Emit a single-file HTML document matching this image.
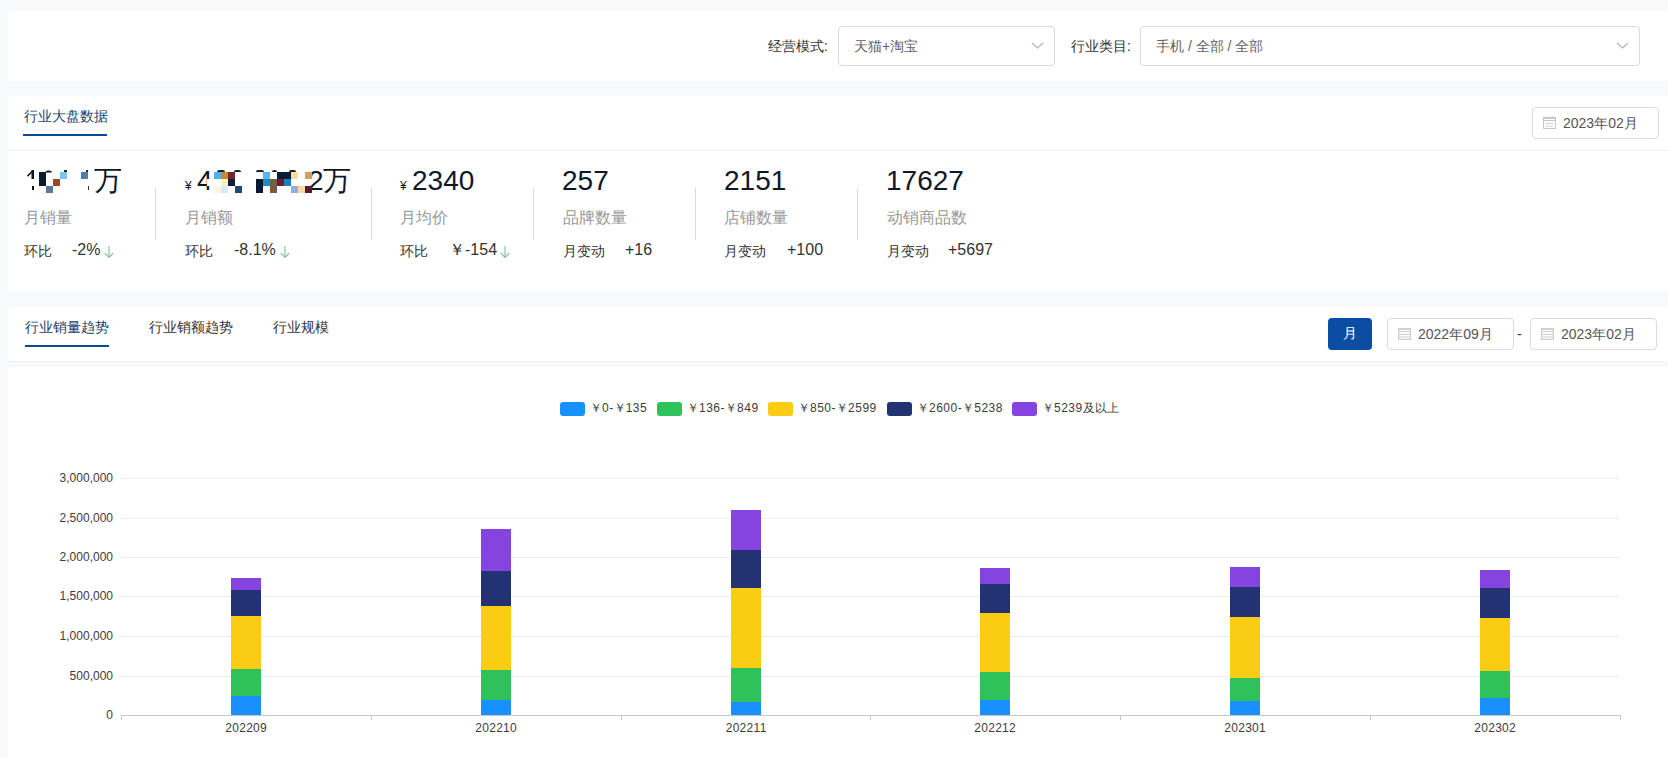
<!DOCTYPE html>
<html><head><meta charset="utf-8">
<style>
*{box-sizing:border-box;margin:0;padding:0}
html,body{width:1668px;height:758px;overflow:hidden;background:#f8f9fb;font-family:"Liberation Sans",sans-serif;color:#333}
.a{position:absolute;white-space:nowrap}
.card{position:absolute;left:8px;width:1662px;background:#fff;border-radius:4px}
.sel{position:absolute;border:1px solid #dadada;border-radius:4px;background:#fff}
.dp{position:absolute;border:1px solid #dadada;border-radius:4px;background:#fff;width:127px;height:32px}
.lbl{font-size:14px;line-height:14px;color:#333}
.big{font-size:28px;line-height:28px;color:#101828}
.sub{font-size:16px;line-height:16px;color:#999}
.hb{font-size:14px;line-height:14px;color:#333}
.val{font-size:16px;line-height:16px;color:#333}
.yl{font-size:12px;line-height:12px;color:#3c3c3c}
.vd{position:absolute;width:1px;background:#dcdcdc}
</style></head><body>

<!-- card 1 filters -->
<div class="card" style="top:11px;height:70px"></div>
<div class="a lbl" style="left:768px;top:39px">经营模式:</div>
<div class="sel" style="left:838px;top:26px;width:217px;height:40px"></div>
<div class="a lbl" style="left:854px;top:39px;color:#606266">天猫+淘宝</div>
<div class="a lbl" style="left:1071px;top:39px">行业类目:</div>
<div class="sel" style="left:1140px;top:26px;width:500px;height:40px"></div>
<div class="a lbl" style="left:1156px;top:39px;color:#606266">手机 / 全部 / 全部</div>

<svg class="a" style="left:0;top:0" width="1668" height="80" fill="none" stroke="#b4b4b4" stroke-width="1.2">
<path d="M1032 43 L1037.5 48 L1043 43"/><path d="M1617 43 L1622.5 48 L1628 43"/></svg>
<!-- card 2 -->
<div class="card" style="top:96px;height:195px"></div>
<div class="a lbl" style="left:24px;top:109px;color:#1d3f6e">行业大盘数据</div>
<div class="a" style="left:23px;top:134px;width:84px;height:2px;background:#0a4a94"></div>
<div class="dp" style="left:1532px;top:107px"></div>
<svg class="a" style="left:1543px;top:116px" width="13" height="13">
<rect x="0.5" y="1.5" width="12" height="11" fill="none" stroke="#c6c6cc"/>
<rect x="0" y="1" width="13" height="2" fill="#c6c6cc"/><rect x="1" y="4" width="11" height="1" fill="#c6c6cc"/>
<rect x="3" y="0" width="1" height="2" fill="#d0d0d6"/><rect x="9" y="0" width="1" height="2" fill="#d0d0d6"/>
<g fill="#c6c6cc"><rect x="3" y="7" width="2" height="1"/><rect x="5.5" y="7" width="2" height="1"/><rect x="8" y="7" width="2" height="1"/>
<rect x="3" y="9.5" width="2" height="1"/><rect x="5.5" y="9.5" width="2" height="1"/><rect x="8" y="9.5" width="2" height="1"/></g></svg>
<div class="a lbl" style="left:1563px;top:116px;color:#555">2023年02月</div>
<div class="a" style="left:8px;top:150px;width:1660px;height:1px;background:#eeeeee"></div>

<!-- stats -->
<svg class="a" style="left:20px;top:165px" width="80" height="30"><g fill="#0b1420"><path d="M11.5 5 H14 V14 H11.5 Z M12 21 H14 V25 H12 Z"/><path d="M7 10.6 L12.6 5 L13.4 6.6 L8 11.8 Z"/><path d="M25 7 Q28.5 4.2 32 6.8 L32 7.4 H25 Z"/></g></svg><div class="a big" id="w1" style="left:94px;top:167px">万</div><div class="a" style="left:39px;top:172px;width:7px;height:14px;background:#0b1b30"></div><div class="a" style="left:53px;top:179px;width:7px;height:7px;background:#984a22"></div><div class="a" style="left:60px;top:172px;width:7px;height:7px;background:#80c4f0"></div><div class="a" style="left:46px;top:186px;width:7px;height:7px;background:#5c7898"></div><div class="a" style="left:81px;top:172px;width:7px;height:7px;background:#4a80b0"></div><div class="a" style="left:64px;top:170px;width:3px;height:2px;background:#222"></div><div class="a" style="left:86px;top:170px;width:2px;height:2px;background:#222"></div><div class="a" style="left:88px;top:186px;width:1px;height:4px;background:#333"></div>
<div class="a sub" style="left:24px;top:210px">月销量</div>
<div class="a hb" style="left:24px;top:244px">环比</div>
<div class="a val" style="left:72px;top:242px">-2%</div>
<div class="vd" style="left:155px;top:188px;height:52px"></div>

<div class="a" style="left:185px;top:180px;font-size:12px;line-height:12px;color:#101828">¥</div><div class="a big" style="left:197px;top:167px">4</div><div class="a big" id="t2" style="left:308px;top:167px">2</div><div class="a big" id="w2" style="left:323px;top:167px">万</div><div class="a" style="left:207px;top:179px;width:7px;height:7px;background:#fff"></div><div class="a" style="left:214px;top:172px;width:7px;height:7px;background:#5aaee8"></div><div class="a" style="left:221px;top:172px;width:7px;height:7px;background:#c88a30"></div><div class="a" style="left:228px;top:172px;width:7px;height:7px;background:#7a2032"></div><div class="a" style="left:263px;top:172px;width:7px;height:7px;background:#5ab4ee"></div><div class="a" style="left:277px;top:172px;width:7px;height:7px;background:#0a1c35"></div><div class="a" style="left:284px;top:172px;width:7px;height:7px;background:#0a1c35"></div><div class="a" style="left:291px;top:172px;width:7px;height:7px;background:#ffdca0"></div><div class="a" style="left:305px;top:172px;width:7px;height:7px;background:#d4a060"></div><div class="a" style="left:221px;top:179px;width:7px;height:7px;background:#fff0b8"></div><div class="a" style="left:228px;top:179px;width:7px;height:7px;background:#0f1f35"></div><div class="a" style="left:256px;top:179px;width:7px;height:7px;background:#0a1a35"></div><div class="a" style="left:263px;top:179px;width:7px;height:7px;background:#1a8ccc"></div><div class="a" style="left:270px;top:179px;width:7px;height:7px;background:#6a6440"></div><div class="a" style="left:277px;top:179px;width:7px;height:7px;background:#701838"></div><div class="a" style="left:284px;top:179px;width:7px;height:7px;background:#1a80c0"></div><div class="a" style="left:214px;top:186px;width:7px;height:7px;background:#fff4e0"></div><div class="a" style="left:221px;top:186px;width:7px;height:7px;background:#d4ecff"></div><div class="a" style="left:235px;top:186px;width:7px;height:7px;background:#1f4a78"></div><div class="a" style="left:256px;top:186px;width:7px;height:7px;background:#0a1a35"></div><div class="a" style="left:270px;top:186px;width:7px;height:7px;background:#7a5a40"></div><div class="a" style="left:291px;top:186px;width:7px;height:7px;background:#90b0d8"></div><div class="a" style="left:298px;top:186px;width:7px;height:7px;background:#ffd8a0"></div><div class="a" style="left:305px;top:186px;width:7px;height:7px;background:#5a1a30"></div><div class="a" style="left:217px;top:170px;width:8px;height:2px;background:#1a2030;border-radius:3px 3px 0 0"></div><div class="a" style="left:234px;top:170px;width:7px;height:2px;background:#1a2030;border-radius:3px 3px 0 0"></div><div class="a" style="left:256px;top:170px;width:8px;height:2px;background:#1a2030;border-radius:3px 3px 0 0"></div><div class="a" style="left:272px;top:170px;width:5px;height:2px;background:#1a2030;border-radius:3px 3px 0 0"></div><div class="a" style="left:289px;top:170px;width:7px;height:2px;background:#1a2030;border-radius:3px 3px 0 0"></div>
<div class="a sub" style="left:185px;top:210px">月销额</div>
<div class="a hb" style="left:185px;top:244px">环比</div>
<div class="a val" style="left:234px;top:242px">-8.1%</div>
<div class="vd" style="left:371px;top:188px;height:52px"></div>

<div class="a" style="left:400px;top:180px;font-size:12px;line-height:12px;color:#101828">¥</div><div class="a big" style="left:412px;top:167px">2340</div>
<div class="a sub" style="left:400px;top:210px">月均价</div>
<div class="a hb" style="left:400px;top:244px">环比</div>
<div class="a val" style="left:449px;top:242px">￥-154</div>
<div class="vd" style="left:533px;top:188px;height:52px"></div>

<div class="a big" style="left:562px;top:167px">257</div>
<div class="a sub" style="left:563px;top:210px">品牌数量</div>
<div class="a hb" style="left:563px;top:244px">月变动</div>
<div class="a val" style="left:625px;top:242px">+16</div>
<div class="vd" style="left:695px;top:188px;height:52px"></div>

<div class="a big" style="left:724px;top:167px">2151</div>
<div class="a sub" style="left:724px;top:210px">店铺数量</div>
<div class="a hb" style="left:724px;top:244px">月变动</div>
<div class="a val" style="left:787px;top:242px">+100</div>
<div class="vd" style="left:857px;top:188px;height:52px"></div>

<div class="a big" style="left:886px;top:167px">17627</div>
<div class="a sub" style="left:887px;top:210px">动销商品数</div>
<div class="a hb" style="left:887px;top:244px">月变动</div>
<div class="a val" style="left:948px;top:242px">+5697</div>

<svg class="a" style="left:103.5px;top:246px" width="10" height="13" fill="none" stroke="#86c196" stroke-width="1.1"><path d="M5 0 V11.5 M0.8 7.2 L5 11.5 L9.2 7.2"/></svg><svg class="a" style="left:279.5px;top:246px" width="10" height="13" fill="none" stroke="#86c196" stroke-width="1.1"><path d="M5 0 V11.5 M0.8 7.2 L5 11.5 L9.2 7.2"/></svg><svg class="a" style="left:499.5px;top:246px" width="10" height="13" fill="none" stroke="#86c196" stroke-width="1.1"><path d="M5 0 V11.5 M0.8 7.2 L5 11.5 L9.2 7.2"/></svg>
<!-- card 3 -->
<div class="card" style="top:307px;height:54px;border-radius:4px 4px 0 0"></div>
<div class="a lbl" style="left:25px;top:320px;color:#1d3f6e">行业销量趋势</div>
<div class="a" style="left:25px;top:345px;width:84px;height:2px;background:#0a4a94"></div>
<div class="a lbl" style="left:149px;top:320px">行业销额趋势</div>
<div class="a lbl" style="left:273px;top:320px">行业规模</div>
<div class="a" style="left:1328px;top:318px;width:44px;height:32px;background:#0a4da3;border-radius:4px"></div>
<div class="a lbl" style="left:1343px;top:326px;color:#fff">月</div>
<div class="dp" style="left:1387px;top:318px"></div>
<svg class="a" style="left:1398px;top:328px" width="13" height="12">
<rect x="0.75" y="0.75" width="11.5" height="10.75" fill="none" stroke="#cfcfd3" stroke-width="1.5"/>
<rect x="0" y="0" width="13" height="2" fill="#cfcfd3"/>
<g fill="#cfcfd3"><rect x="2" y="3" width="9" height="1"/><rect x="2" y="6" width="9" height="1"/><rect x="2" y="8.5" width="9" height="1"/></g></svg>
<div class="a lbl" style="left:1418px;top:327px;color:#555">2022年09月</div>
<div class="a lbl" style="left:1517px;top:327px">-</div>
<div class="dp" style="left:1530px;top:318px"></div>
<svg class="a" style="left:1541px;top:328px" width="13" height="12">
<rect x="0.75" y="0.75" width="11.5" height="10.75" fill="none" stroke="#cfcfd3" stroke-width="1.5"/>
<rect x="0" y="0" width="13" height="2" fill="#cfcfd3"/>
<g fill="#cfcfd3"><rect x="2" y="3" width="9" height="1"/><rect x="2" y="6" width="9" height="1"/><rect x="2" y="8.5" width="9" height="1"/></g></svg>
<div class="a lbl" style="left:1561px;top:327px;color:#555">2023年02月</div>
<div class="a" style="left:8px;top:361px;width:1656px;height:1px;background:#efefef"></div><div class="a" style="left:8px;top:362px;width:1656px;height:5px;background:#f9f9f9"></div>

<!-- card 4 chart -->
<div class="a" style="left:0;top:367px;width:8px;height:391px;background:#f9f9f9"></div>
<div class="card" style="top:367px;height:400px"></div>

<svg class="a" style="left:0;top:0" width="1668" height="758">
<rect x="121" y="478" width="1499" height="1" fill="#eeeeee"/>
<rect x="121" y="518" width="1499" height="1" fill="#eeeeee"/>
<rect x="121" y="557" width="1499" height="1" fill="#eeeeee"/>
<rect x="121" y="596" width="1499" height="1" fill="#eeeeee"/>
<rect x="121" y="636" width="1499" height="1" fill="#eeeeee"/>
<rect x="121" y="676" width="1499" height="1" fill="#eeeeee"/>
<rect x="121" y="715" width="1500" height="1" fill="#c8c8c8"/>
<rect x="121" y="715" width="1" height="5" fill="#c8c8c8"/>
<rect x="371" y="715" width="1" height="5" fill="#c8c8c8"/>
<rect x="621" y="715" width="1" height="5" fill="#c8c8c8"/>
<rect x="870" y="715" width="1" height="5" fill="#c8c8c8"/>
<rect x="1120" y="715" width="1" height="5" fill="#c8c8c8"/>
<rect x="1370" y="715" width="1" height="5" fill="#c8c8c8"/>
<rect x="1620" y="715" width="1" height="5" fill="#c8c8c8"/>
<rect x="231" y="696" width="30" height="19" fill="#1890FF"/>
<rect x="231" y="669" width="30" height="27" fill="#2FC25B"/>
<rect x="231" y="616" width="30" height="53" fill="#FACC14"/>
<rect x="231" y="590" width="30" height="26" fill="#223273"/>
<rect x="231" y="578" width="30" height="12" fill="#8543E0"/>
<rect x="481" y="700" width="30" height="15" fill="#1890FF"/>
<rect x="481" y="670" width="30" height="30" fill="#2FC25B"/>
<rect x="481" y="606" width="30" height="64" fill="#FACC14"/>
<rect x="481" y="571" width="30" height="35" fill="#223273"/>
<rect x="481" y="529" width="30" height="42" fill="#8543E0"/>
<rect x="731" y="702" width="30" height="13" fill="#1890FF"/>
<rect x="731" y="668" width="30" height="34" fill="#2FC25B"/>
<rect x="731" y="588" width="30" height="80" fill="#FACC14"/>
<rect x="731" y="550" width="30" height="38" fill="#223273"/>
<rect x="731" y="510" width="30" height="40" fill="#8543E0"/>
<rect x="980" y="700" width="30" height="15" fill="#1890FF"/>
<rect x="980" y="672" width="30" height="28" fill="#2FC25B"/>
<rect x="980" y="613" width="30" height="59" fill="#FACC14"/>
<rect x="980" y="584" width="30" height="29" fill="#223273"/>
<rect x="980" y="568" width="30" height="16" fill="#8543E0"/>
<rect x="1230" y="701" width="30" height="14" fill="#1890FF"/>
<rect x="1230" y="678" width="30" height="23" fill="#2FC25B"/>
<rect x="1230" y="617" width="30" height="61" fill="#FACC14"/>
<rect x="1230" y="587" width="30" height="30" fill="#223273"/>
<rect x="1230" y="567" width="30" height="20" fill="#8543E0"/>
<rect x="1480" y="698" width="30" height="17" fill="#1890FF"/>
<rect x="1480" y="671" width="30" height="27" fill="#2FC25B"/>
<rect x="1480" y="618" width="30" height="53" fill="#FACC14"/>
<rect x="1480" y="588" width="30" height="30" fill="#223273"/>
<rect x="1480" y="570" width="30" height="18" fill="#8543E0"/>
</svg>
<div class="a yl" style="right:1555px;top:472px">3,000,000</div>
<div class="a yl" style="right:1555px;top:512px">2,500,000</div>
<div class="a yl" style="right:1555px;top:551px">2,000,000</div>
<div class="a yl" style="right:1555px;top:590px">1,500,000</div>
<div class="a yl" style="right:1555px;top:630px">1,000,000</div>
<div class="a yl" style="right:1555px;top:670px">500,000</div>
<div class="a yl" style="right:1555px;top:709px">0</div>
<div class="a yl" style="left:216px;width:60px;text-align:center;top:722px;letter-spacing:0.3px;text-indent:0.3px">202209</div>
<div class="a yl" style="left:466px;width:60px;text-align:center;top:722px;letter-spacing:0.3px;text-indent:0.3px">202210</div>
<div class="a yl" style="left:716px;width:60px;text-align:center;top:722px;letter-spacing:0.3px;text-indent:0.3px">202211</div>
<div class="a yl" style="left:965px;width:60px;text-align:center;top:722px;letter-spacing:0.3px;text-indent:0.3px">202212</div>
<div class="a yl" style="left:1215px;width:60px;text-align:center;top:722px;letter-spacing:0.3px;text-indent:0.3px">202301</div>
<div class="a yl" style="left:1465px;width:60px;text-align:center;top:722px;letter-spacing:0.3px;text-indent:0.3px">202302</div>
<div class="a" style="left:560px;top:402px;width:25px;height:14px;border-radius:3px;background:#1890FF"></div>
<div class="a yl" style="left:590px;top:402px">￥<span style="letter-spacing:0.5px">0-</span>￥<span style="letter-spacing:0.5px">135</span></div>
<div class="a" style="left:657px;top:402px;width:25px;height:14px;border-radius:3px;background:#2FC25B"></div>
<div class="a yl" style="left:687px;top:402px">￥<span style="letter-spacing:0.5px">136-</span>￥<span style="letter-spacing:0.5px">849</span></div>
<div class="a" style="left:768px;top:402px;width:25px;height:14px;border-radius:3px;background:#FACC14"></div>
<div class="a yl" style="left:798px;top:402px">￥<span style="letter-spacing:0.5px">850-</span>￥<span style="letter-spacing:0.5px">2599</span></div>
<div class="a" style="left:887px;top:402px;width:25px;height:14px;border-radius:3px;background:#223273"></div>
<div class="a yl" style="left:917px;top:402px">￥<span style="letter-spacing:0.5px">2600-</span>￥<span style="letter-spacing:0.5px">5238</span></div>
<div class="a" style="left:1012px;top:402px;width:25px;height:14px;border-radius:3px;background:#8543E0"></div>
<div class="a yl" style="left:1042px;top:402px">￥<span style="letter-spacing:0.5px">5239</span>及以上</div>
</body></html>
